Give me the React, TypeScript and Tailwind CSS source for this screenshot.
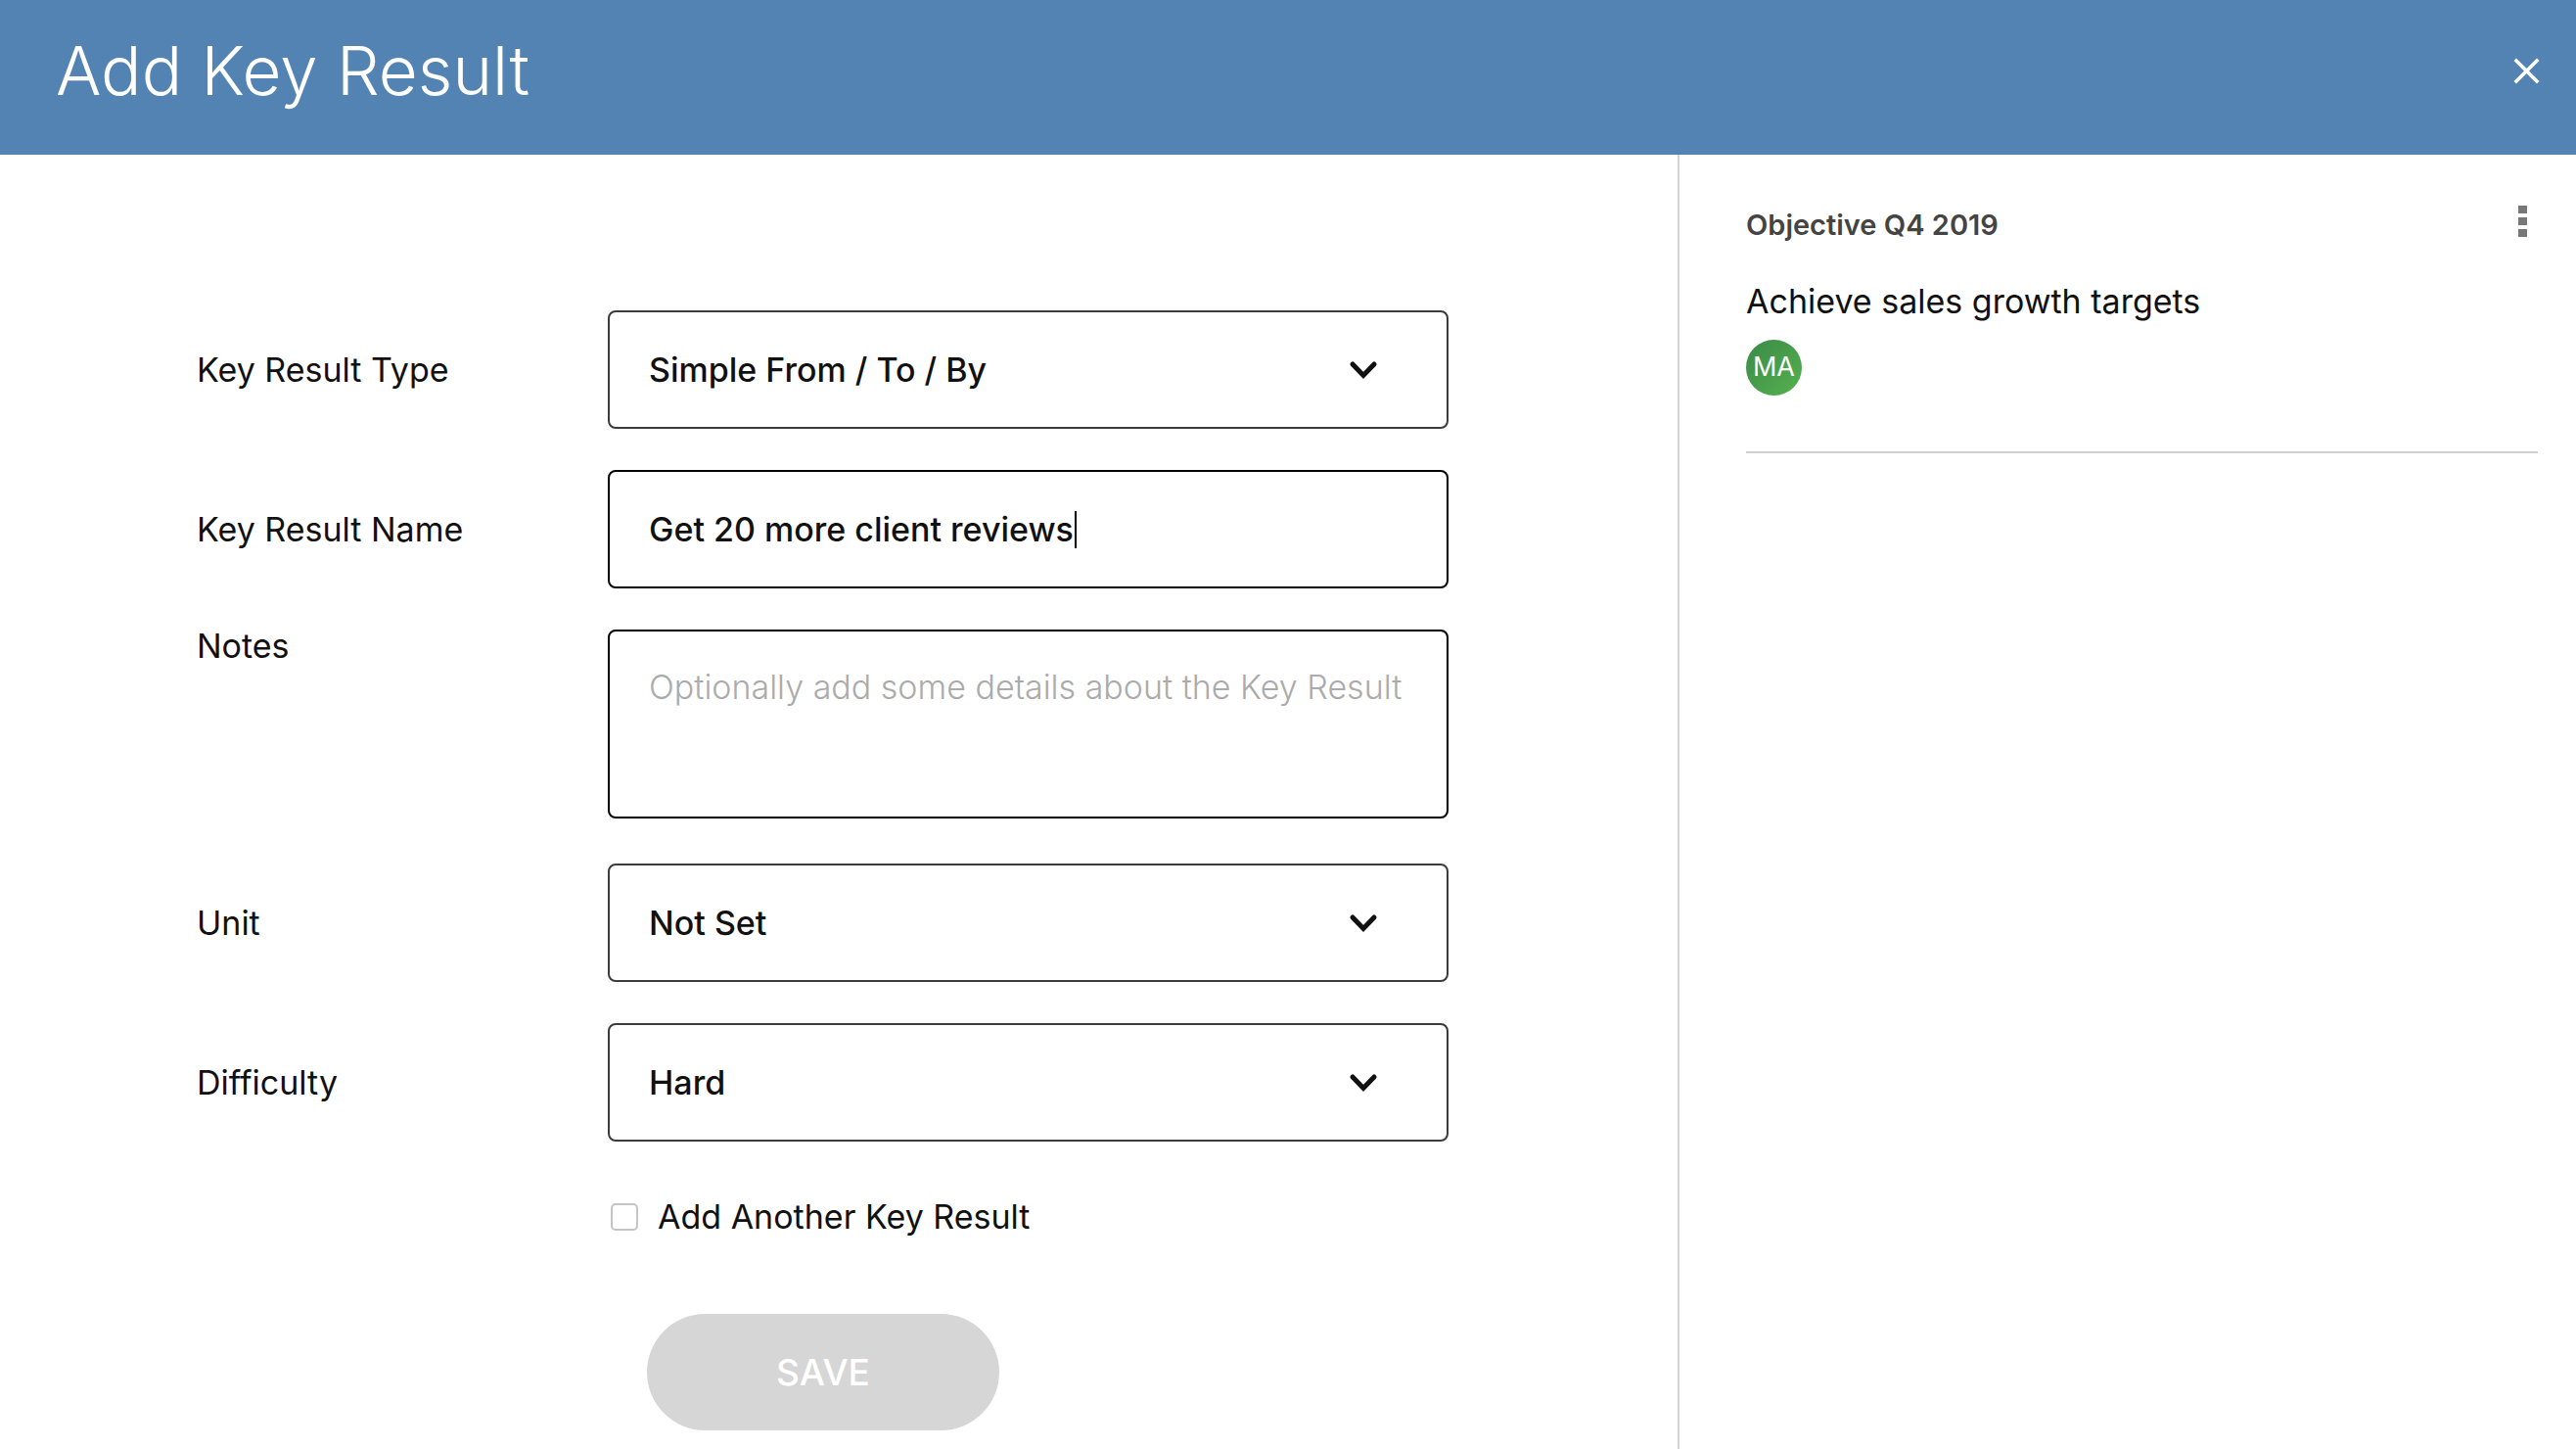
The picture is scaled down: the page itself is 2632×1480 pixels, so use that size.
import { useState } from "react";

const FONT = "font-['Inter','Open_Sans',sans-serif]";

function Chevron() {
  return (
    <svg width="30" height="20" viewBox="0 0 30 20" className="shrink-0">
      <polyline
        points="4,4 15,15.5 26,4"
        fill="none"
        stroke="#111"
        strokeWidth="5"
        strokeLinecap="round"
        strokeLinejoin="miter"
      />
    </svg>
  );
}

function Row({
  label,
  children,
  top,
}: {
  label: string;
  children: React.ReactNode;
  top?: boolean;
}) {
  return (
    <div className={"flex " + (top ? "items-start" : "items-center")}>
      <div
        className={
          "w-[621px] shrink-0 pl-[201px] text-[34px] text-[#111] " +
          (top ? "-mt-[9px]" : "")
        }
      >
        {label}
      </div>
      {children}
    </div>
  );
}

function SelectBox({ value }: { value: string }) {
  return (
    <div className="flex h-[121px] w-[859px] items-center justify-between rounded-[8px] border-2 border-[#3c3c3c] pl-[40px] pr-[70px]">
      <span className="text-[34px] font-medium text-[#111]">{value}</span>
      <Chevron />
    </div>
  );
}

export default function App() {
  const [another, setAnother] = useState(false);

  return (
    <div className={"flex h-[1480px] w-[2632px] flex-col bg-white " + FONT}>
      {/* Header */}
      <header className="flex h-[158px] shrink-0 items-center justify-between bg-[#5383b3] pl-[57px] pr-[33px]">
        <h1 className="pb-[12px] text-[69px] font-light text-white">Add Key Result</h1>
        <button aria-label="Close" className="mb-[14px] p-1">
          <svg width="27" height="27" viewBox="0 0 27 27">
            <path
              d="M3 3 L24 24 M24 3 L3 24"
              stroke="white"
              strokeWidth="3.6"
              strokeLinecap="square"
            />
          </svg>
        </button>
      </header>

      <div className="flex min-h-0 flex-1">
        {/* Form */}
        <main className="w-[1716px] shrink-0 border-r-2 border-[#d4d4d4] pt-[159px]">
          <div className="flex flex-col gap-[42px]">
            <Row label="Key Result Type">
              <SelectBox value="Simple From / To / By" />
            </Row>
            <Row label="Key Result Name">
              <div className="flex h-[121px] w-[859px] items-center rounded-[8px] border-2 border-black pl-[40px]">
                <span className="text-[34px] font-medium text-[#111]">
                  Get 20 more client reviews
                </span>
                <span className="ml-[1px] h-[38px] w-[2px] bg-black" />
              </div>
            </Row>
            <Row label="Notes" top>
              <div className="h-[193px] w-[859px] rounded-[8px] border-2 border-black pl-[40px] pt-[31px]">
                <span className="text-[34px] font-light text-[#ababab]">
                  Optionally add some details about the Key Result
                </span>
              </div>
            </Row>
          </div>

          <div className="mt-[46px] flex flex-col gap-[42px]">
            <Row label="Unit">
              <SelectBox value="Not Set" />
            </Row>
            <Row label="Difficulty">
              <SelectBox value="Hard" />
            </Row>
          </div>

          <label className="ml-[624px] mt-[51px] flex cursor-pointer items-center gap-[20px]">
            <input
              type="checkbox"
              checked={another}
              onChange={(e) => setAnother(e.target.checked)}
              className="h-[28px] w-[28px] appearance-none rounded-[5px] border-2 border-[#c4c4c4] bg-white checked:bg-[#5383b3]"
            />
            <span className="text-[34px] text-[#111]">Add Another Key Result</span>
          </label>

          <button
            disabled
            className="ml-[661px] mt-[74px] flex h-[119px] w-[360px] items-center justify-center rounded-full bg-[#d6d6d6] text-[37px] font-medium text-white"
          >
            SAVE
          </button>
        </main>

        {/* Objective side panel */}
        <aside className="flex-1 pl-[68px] pr-[39px] pt-[42px]">
          <div className="flex items-start justify-between">
            <div className="pt-[8px] text-[29px] font-semibold text-[#444]">Objective Q4 2019</div>
            <button aria-label="More" className="mr-[11px] mt-[4px] flex flex-col gap-[4px] pt-[6px]">
              <span className="h-[8px] w-[9px] bg-[#777]" />
              <span className="h-[8px] w-[9px] bg-[#777]" />
              <span className="h-[8px] w-[9px] bg-[#777]" />
            </button>
          </div>
          <div className="mt-[30px] text-[34px] text-[#111]">Achieve sales growth targets</div>
          <div className="mt-[14px] flex h-[57px] w-[57px] items-center justify-center rounded-full bg-gradient-to-br from-[#3a8a46] to-[#56b14f] text-[27px] text-white">
            MA
          </div>
          <div className="mt-[57px] h-[2px] bg-[#d0d0d0]" />
        </aside>
      </div>
    </div>
  );
}
